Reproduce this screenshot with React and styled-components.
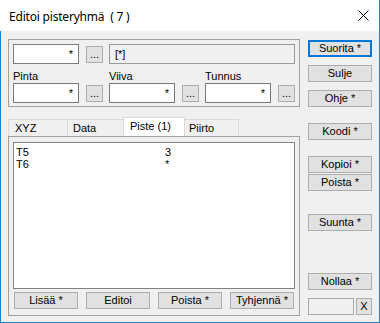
import React from 'react';
import styled, { createGlobalStyle } from 'styled-components';

const Global = createGlobalStyle`
  html, body { margin: 0; padding: 0; background: #ffffff; }
  body { font-family: "Liberation Sans", Arial, sans-serif; font-size: 11px; color: #000; }
  * { box-sizing: border-box; }
`;

const Window = styled.div`
  width: 380px;
  height: 323px;
  display: flex;
  flex-direction: column;
  border-right: 1px solid #1883d7;
  border-bottom: 1px solid #1883d7;
  background: #f0f0f0;
`;

const TitleBar = styled.div`
  height: 31px;
  flex: none;
  background: #ffffff;
  display: flex;
  align-items: center;
  justify-content: space-between;
  padding: 0 10px 0 9px;
`;

const TitleText = styled.div`
  font-family: "Noto Sans", "Open Sans", sans-serif;
  font-size: 12px;
  letter-spacing: -0.2px;
  color: #000;
  margin-top: 1px;
`;

const Body = styled.div`
  flex: 1;
  display: flex;
  gap: 8px;
  padding: 8px 7px 0 7px;
  border-left: 1px solid #1883d7;
`;

const LeftCol = styled.div`
  width: 292px;
  display: flex;
  flex-direction: column;
`;

const RightCol = styled.div`
  width: 64px;
  display: flex;
  flex-direction: column;
`;

const GroupBox = styled.div`
  border: 1px solid #a0a0a0;
  padding: 4px 4px 3px 4px;
  display: flex;
  flex-direction: column;
`;

const Row = styled.div`
  display: flex;
  gap: 6px;
  margin-top: ${p => p.$mt || 0}px;
`;

const FieldGroup = styled.div`
  display: flex;
  flex-direction: column;
`;

const Pair = styled.div`
  display: flex;
  align-items: center;
  gap: 7px;
  height: 20px;
`;

const Label = styled.div`
  height: 13px;
  line-height: 13px;
  padding-left: 0;
`;

const Edit = styled.div`
  width: 66px;
  height: 20px;
  border: 1px solid #7a7a7a;
  background: #ffffff;
  text-align: right;
  padding-right: 5px;
  line-height: 18px;
`;

const ReadOnly = styled.div`
  flex: 1;
  height: 20px;
  border: 1px solid #9a9a9a;
  background: #f0f0f0;
  padding-left: 5px;
  line-height: 18px;
`;

const Button = styled.div`
  width: ${p => p.$w || 64}px;
  height: 17px;
  flex: none;
  margin-top: ${p => p.$mt || 0}px;
  border: ${p => (p.$default ? '2px solid #0078d7' : '1px solid #adadad')};
  background: #e1e1e1;
  display: flex;
  align-items: center;
  justify-content: center;
  line-height: 13px;
  white-space: nowrap;
`;

const TabStrip = styled.div`
  margin-top: 10px;
  height: 19px;
  display: flex;
  align-items: flex-end;
`;

const Tab = styled.div`
  position: relative;
  z-index: ${p => (p.$active ? 1 : 0)};
  width: ${p => p.$w}px;
  height: ${p => (p.$active ? 19 : 17)}px;
  margin-left: ${p => (p.$first ? 0 : -1)}px;
  border: 1px solid #d9d9d9;
  border-bottom: none;
  background: ${p => (p.$active ? '#ffffff' : '#f0f0f0')};
  padding: 2px 0 0 ${p => p.$pl || 6}px;
  line-height: 13px;
  white-space: nowrap;
`;

const Panel = styled.div`
  height: 180px;
  border: 1px solid #a0a0a0;
  padding: 5px 4px 0 4px;
  display: flex;
  flex-direction: column;
`;

const List = styled.div`
  height: 147px;
  border: 1px solid #828282;
  background: #ffffff;
  padding: 3px 0 0 2px;
`;

const ListRow = styled.div`
  display: grid;
  grid-template-columns: 149px 1fr;
  height: 12px;
  line-height: 12px;
`;

const ButtonRow = styled.div`
  display: flex;
  gap: 8px;
  margin-top: 3px;
  padding-left: 1px;
`;

const SmallRow = styled.div`
  display: flex;
  gap: 2px;
  margin-top: ${p => p.$mt || 0}px;
`;

const SmallEdit = styled.div`
  width: 46px;
  height: 17px;
  border: 1px solid #a8a8a8;
  background: #f0f0f0;
`;

const CloseIcon = () => (
  <svg width="11" height="11" viewBox="0 0 11 11">
    <path d="M0.5 0.5 L10.5 10.5 M10.5 0.5 L0.5 10.5" stroke="#000" strokeWidth="1" fill="none" />
  </svg>
);

const rows = [
  ['T5', '3'],
  ['T6', '*'],
];

export default function App() {
  return (
    <>
      <Global />
      <Window>
        <TitleBar>
          <TitleText>Editoi pisteryhmä&nbsp; ( 7 )</TitleText>
          <CloseIcon />
        </TitleBar>
        <Body>
          <LeftCol>
            <GroupBox>
              <Row>
                <Pair>
                  <Edit>*</Edit>
                  <Button $w={17}>...</Button>
                </Pair>
                <ReadOnly>[*]</ReadOnly>
              </Row>
              <Row $mt={6}>
                {['Pinta', 'Viiva', 'Tunnus'].map(l => (
                  <FieldGroup key={l}>
                    <Label>{l}</Label>
                    <Pair>
                      <Edit>*</Edit>
                      <Button $w={17}>...</Button>
                    </Pair>
                  </FieldGroup>
                ))}
              </Row>
            </GroupBox>
            <TabStrip>
              <Tab $first $w={60}>XYZ</Tab>
              <Tab $w={57} $pl={5}>Data</Tab>
              <Tab $active $w={62}>Piste (1)</Tab>
              <Tab $w={55} $pl={4}>Piirto</Tab>
            </TabStrip>
            <Panel>
              <List>
                {rows.map(([a, b]) => (
                  <ListRow key={a}>
                    <span>{a}</span>
                    <span>{b}</span>
                  </ListRow>
                ))}
              </List>
              <ButtonRow>
                <Button>Lisää *</Button>
                <Button>Editoi</Button>
                <Button>Poista *</Button>
                <Button>Tyhjennä *</Button>
              </ButtonRow>
            </Panel>
          </LeftCol>
          <RightCol>
            <Button $default $mt={1}>Suorita *</Button>
            <Button $mt={8}>Sulje</Button>
            <Button $mt={8}>Ohje *</Button>
            <Button $mt={16}>Koodi *</Button>
            <Button $mt={16}>Kopioi *</Button>
            <Button $mt={1}>Poista *</Button>
            <Button $mt={23}>Suunta *</Button>
            <Button $mt={42}>Nollaa *</Button>
            <SmallRow $mt={8}>
              <SmallEdit />
              <Button $w={16}>X</Button>
            </SmallRow>
          </RightCol>
        </Body>
      </Window>
    </>
  );
}
